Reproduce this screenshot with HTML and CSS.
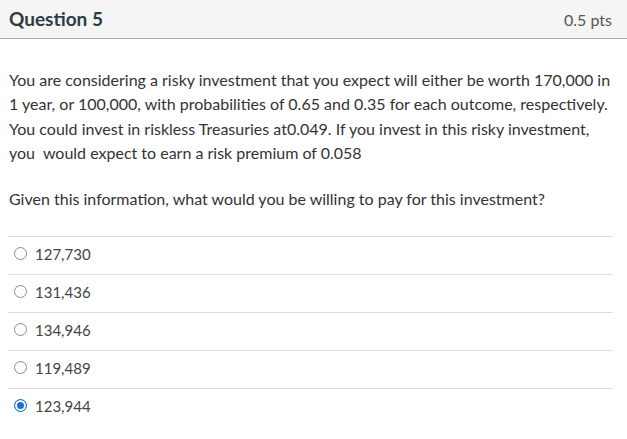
FILE: index.html
```html
<!DOCTYPE html>
<html>
<head>
<meta charset="utf-8">
<link rel="stylesheet" href="styles.css">
</head>
<body>
<div class="question">
  <div class="qhead">
    <span class="qtitle">Question 5</span>
    <span class="qpts">0.5 pts</span>
  </div>
  <div class="qbody">
    <p class="qtext">You are considering a risky investment that you expect will either be worth 170,000 in 1 year, or 100,000, with probabilities of 0.65 and 0.35 for each outcome, respectively. You could invest in riskless Treasuries at0.049. If you invest in this risky investment, you&nbsp; would expect to earn a risk premium of 0.058</p>
    <p class="qtext">Given this information, what would you be willing to pay for this investment?</p>
  </div>
  <div class="answers">
    <div class="answer"><span class="radio"></span><span class="label">127,730</span></div>
    <div class="answer"><span class="radio"></span><span class="label">131,436</span></div>
    <div class="answer"><span class="radio"></span><span class="label">134,946</span></div>
    <div class="answer"><span class="radio"></span><span class="label">119,489</span></div>
    <div class="answer"><span class="radio checked"></span><span class="label">123,944</span></div>
  </div>
</div>
</body>
</html>
```
FILE: styles.css
```css
html, body {
  margin: 0;
  padding: 0;
  background: #ffffff;
}
body {
  font-family: Lato, "Liberation Sans", sans-serif;
  color: #333333;
}
.qhead {
  display: flex;
  justify-content: space-between;
  align-items: center;
  padding: 0 15px 0 9px;
  background: #f5f5f5;
  border-bottom: 1px solid #a9a9a9;
  box-sizing: border-box;
  height: 39px;
}
.qtitle {
  font-size: 19px;
  font-weight: 700;
  color: #2d3b45;
  margin-top: -1px;
}
.qpts {
  font-size: 16px;
  color: #555555;
}
.qbody {
  padding: 29px 9px 0 9px;
}
.qtext {
  margin: 0 0 22px 0;
  font-size: 16px;
  line-height: 24.3px;
  color: #333333;
}
.qtext:last-child {
  margin-bottom: 25px;
}
.answers {
  margin: 0 14px 0 8px;
}
.answer {
  display: flex;
  align-items: center;
  height: 38px;
  box-sizing: border-box;
  border-top: 1px solid #dedede;
  padding-left: 6px;
  padding-bottom: 4px;
}
.radio {
  width: 13px;
  height: 13px;
  box-sizing: border-box;
  border: 1px solid #8c8c8c;
  border-radius: 50%;
  background: #fff;
  margin-right: 8px;
  flex: none;
}
.radio.checked {
  border: 1px solid #1a6fd8;
  background: #1a6fd8;
  box-shadow: inset 0 0 0 2px #ffffff;
}
.label {
  font-size: 15px;
  color: #444444;
}
```
